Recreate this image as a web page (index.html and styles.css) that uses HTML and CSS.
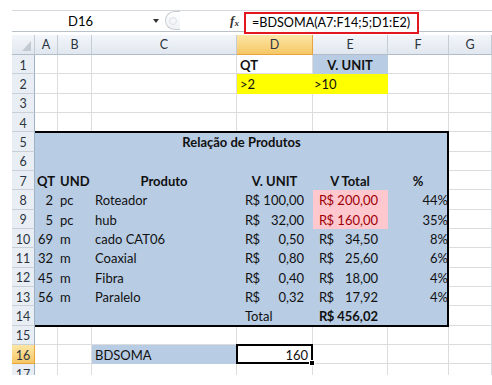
FILE: index.html
```html
<!DOCTYPE html>
<html lang="pt">
<head>
    <meta charset="UTF-8">
    <title>BDSOMA - Relação de Produtos</title>
    <link rel="stylesheet" href="styles.css">
</head>
<body>
    <div class="window">
        <div class="formula-bar">
            <div class="name-box">D16</div>
            <div class="nb-arrow"><span class="tri"></span></div>
            <div class="knob"><span class="knob-dot"></span></div>
            <div class="fx">f<sub>x</sub></div>
            <div class="formula">=BDSOMA(A7:F14;5;D1:E2)</div>
        </div>

        <div class="sheet-wrap">
        <div class="sheet">
            <!-- column headers -->
            <div class="corner"></div>
            <div class="ch">A</div>
            <div class="ch">B</div>
            <div class="ch">C</div>
            <div class="ch sel">D</div>
            <div class="ch">E</div>
            <div class="ch">F</div>
            <div class="ch">G</div>

            <!-- 1 -->
            <div class="rh">1</div>
            <div class="c"></div><div class="c"></div><div class="c"></div>
            <div class="c bold pl3">QT</div>
            <div class="c b bold center">V. UNIT</div>
            <div class="c"></div><div class="c"></div>

            <!-- 2 -->
            <div class="rh">2</div>
            <div class="c"></div><div class="c"></div><div class="c"></div>
            <div class="c yel pl3">&gt;2</div>
            <div class="c yel pl1">&gt;10</div>
            <div class="c"></div><div class="c"></div>

            <!-- 3 -->
            <div class="rh">3</div>
            <div class="c"></div><div class="c"></div><div class="c"></div>
            <div class="c"></div><div class="c"></div><div class="c"></div><div class="c"></div>

            <!-- 4 -->
            <div class="rh">4</div>
            <div class="c"></div><div class="c"></div><div class="c"></div>
            <div class="c"></div><div class="c"></div><div class="c"></div><div class="c"></div>

            <!-- 5 -->
            <div class="rh">5</div>
            <div class="c b bold center title">Relação de Produtos</div>
            <div class="c"></div>

            <!-- 6 -->
            <div class="rh">6</div>
            <div class="c b"></div><div class="c b"></div><div class="c b"></div>
            <div class="c b"></div><div class="c b"></div><div class="c b"></div>
            <div class="c"></div>

            <!-- 7 -->
            <div class="rh">7</div>
            <div class="c b bold">QT</div>
            <div class="c b bold">UND</div>
            <div class="c b bold center">Produto</div>
            <div class="c b bold center">V. UNIT</div>
            <div class="c b bold center">V Total</div>
            <div class="c b bold center">%</div>
            <div class="c"></div>

            <!-- 8 -->
            <div class="rh">8</div>
            <div class="c b num">2</div>
            <div class="c b">pc</div>
            <div class="c b pl3">Roteador</div>
            <div class="c b acc"><span>R$</span><span>100,00</span></div>
            <div class="c pink acc acc-e"><span>R$</span><span>200,00</span></div>
            <div class="c b pct">44%</div>
            <div class="c"></div>

            <!-- 9 -->
            <div class="rh">9</div>
            <div class="c b num">5</div>
            <div class="c b">pc</div>
            <div class="c b pl3">hub</div>
            <div class="c b acc"><span>R$</span><span>32,00</span></div>
            <div class="c pink acc acc-e"><span>R$</span><span>160,00</span></div>
            <div class="c b pct">35%</div>
            <div class="c"></div>

            <!-- 10 -->
            <div class="rh">10</div>
            <div class="c b num">69</div>
            <div class="c b">m</div>
            <div class="c b pl3">cado CAT06</div>
            <div class="c b acc"><span>R$</span><span>0,50</span></div>
            <div class="c b acc acc-e"><span>R$</span><span>34,50</span></div>
            <div class="c b pct">8%</div>
            <div class="c"></div>

            <!-- 11 -->
            <div class="rh">11</div>
            <div class="c b num">32</div>
            <div class="c b">m</div>
            <div class="c b pl3">Coaxial</div>
            <div class="c b acc"><span>R$</span><span>0,80</span></div>
            <div class="c b acc acc-e"><span>R$</span><span>25,60</span></div>
            <div class="c b pct">6%</div>
            <div class="c"></div>

            <!-- 12 -->
            <div class="rh">12</div>
            <div class="c b num">45</div>
            <div class="c b">m</div>
            <div class="c b pl3">Fibra</div>
            <div class="c b acc"><span>R$</span><span>0,40</span></div>
            <div class="c b acc acc-e"><span>R$</span><span>18,00</span></div>
            <div class="c b pct">4%</div>
            <div class="c"></div>

            <!-- 13 -->
            <div class="rh">13</div>
            <div class="c b num">56</div>
            <div class="c b">m</div>
            <div class="c b pl3">Paralelo</div>
            <div class="c b acc"><span>R$</span><span>0,32</span></div>
            <div class="c b acc acc-e"><span>R$</span><span>17,92</span></div>
            <div class="c b pct">4%</div>
            <div class="c"></div>

            <!-- 14 -->
            <div class="rh">14</div>
            <div class="c b"></div><div class="c b"></div><div class="c b"></div>
            <div class="c b acc">Total</div>
            <div class="c b acc acc-e bold"><span>R$</span><span>456,02</span></div>
            <div class="c b"></div>
            <div class="c"></div>

            <!-- 15 -->
            <div class="rh">15</div>
            <div class="c"></div><div class="c"></div><div class="c"></div>
            <div class="c"></div><div class="c"></div><div class="c"></div><div class="c"></div>

            <!-- 16 -->
            <div class="rh sel">16</div>
            <div class="c"></div><div class="c"></div>
            <div class="c b pl3">BDSOMA</div>
            <div class="c right">160</div>
            <div class="c"></div><div class="c"></div><div class="c"></div>

            <!-- 17 -->
            <div class="rh">17</div>
            <div class="c"></div><div class="c"></div><div class="c"></div>
            <div class="c"></div><div class="c"></div><div class="c"></div><div class="c"></div>
        </div>

        <!-- borders drawn over the cells -->
        <div class="sheet overlay">
            <div class="table-frame"></div>
            <div class="active-cell"><span class="handle"></span></div>
        </div>
        </div>
    </div>
</body>
</html>
```

FILE: styles.css
```css
* {
    box-sizing: border-box;
}
body {
    margin: 0;
    font-family: Lato, "Liberation Sans", sans-serif;
    background-color: #fff;
    color: #000;
}
.window {
    width: 492px;
    height: 385px;
    overflow: hidden;
}

/* formula bar */
.formula-bar {
    display: flex;
    align-items: flex-start;
    height: 22px;
    margin: 10px 0 3px 12px;
    border-top: 1px solid #d6dade;
    border-bottom: 1px solid #b9c1ca;
    font-size: 12.6px;
}
.name-box {
    width: 136px;
    height: 20px;
    line-height: 20px;
    padding-left: 56px;
    font-size: 13px;
}
.nb-arrow {
    width: 16px;
    height: 20px;
    display: flex;
    align-items: center;
    justify-content: center;
}
.tri {
    width: 0;
    height: 0;
    border-left: 3px solid transparent;
    border-right: 3px solid transparent;
    border-top: 4px solid #333;
}
.knob {
    width: 15px;
    height: 19px;
    margin: 0 0 0 1px;
    border: 1px solid #c8cdd4;
    border-right: none;
    border-radius: 10px 0 0 10px;
    background: linear-gradient(#ffffff, #eef1f5);
    display: flex;
    align-items: center;
    padding-left: 3px;
}
.knob-dot {
    width: 8px;
    height: 8px;
    border-radius: 50%;
    border: 1px solid #dde1e6;
    background-color: #f4f6f8;
}
.fx {
    width: 17px;
    margin-left: 46px;
    height: 20px;
    line-height: 20px;
    font-family: "Liberation Serif", serif;
    font-style: italic;
    font-weight: bold;
    font-size: 13px;
    color: #333;
    text-align: center;
}
.fx sub {
    font-size: 9px;
    vertical-align: baseline;
    position: relative;
    top: 1px;
}
.formula {
    position: relative;
    z-index: 2;
    width: 175px;
    height: 22px;
    margin: 1px 0 0 1px;
    border: 2px solid #e3171f;
    background-color: #fff;
    padding-left: 6px;
    line-height: 18px;
    white-space: nowrap;
}

/* sheet grid */
.sheet-wrap {
    display: grid;
    margin-left: 12px;
    height: 340px;
    overflow: hidden;
}
.sheet {
    grid-area: 1 / 1;
    display: grid;
    grid-template-columns: 23px 23px 34px 145px 76px 75px 61px 43px;
    grid-template-rows: 20px;
    grid-auto-rows: 19.33px;
    align-content: start;
    font-size: 13px;
}
.overlay {
    pointer-events: none;
}
.corner, .ch, .rh {
    background: linear-gradient(#f3f6fa, #e1e7ef);
    color: #2b3440;
    border-right: 1px solid #c5ccd5;
    border-bottom: 1px solid #b3bdc9;
    display: flex;
    align-items: center;
    justify-content: center;
    font-size: 12.5px;
}
.corner {
    position: relative;
}
.corner::after {
    content: "";
    position: absolute;
    right: 3px;
    bottom: 3px;
    border-left: 9px solid transparent;
    border-bottom: 10px solid #c4cad1;
}
.rh {
    background: #e9eef4;
    border-bottom-color: #c9d0d8;
    border-right-color: #9fb1c5;
    padding-top: 2px;
}
.ch.sel, .rh.sel {
    background: linear-gradient(#fde7a6, #f5c766);
    border-right-color: #e8a33a;
    border-bottom-color: #e8a33a;
}

.c {
    border-right: 1px solid #dadcdd;
    border-bottom: 1px solid #dadcdd;
    display: flex;
    align-items: center;
    padding: 2px 2px 0;
    white-space: nowrap;
    min-width: 0;
    color: #111;
}
.b {
    background-color: #b8cce4;
    border-color: transparent;
}
.yel {
    background-color: #ffff00;
    border-color: transparent;
}
.pink {
    background-color: #ffc7ce;
    border-color: transparent;
    color: #9c0006;
}
.bold {
    font-weight: bold;
}
.center {
    justify-content: center;
}
.right {
    justify-content: flex-end;
    padding-right: 4px;
}
.pl1 {
    padding-left: 1px;
}
.pl3 {
    padding-left: 3px;
}
.title {
    grid-column: span 6;
}
.num {
    justify-content: flex-end;
    padding-right: 4px;
}
.pct {
    justify-content: flex-end;
    padding-right: 0;
}
.acc {
    justify-content: space-between;
    padding-left: 8px;
    padding-right: 8px;
}
.acc span:first-child {
    letter-spacing: -0.6px;
}
.acc-e {
    padding-left: 6px;
    padding-right: 9px;
}

/* overlays */
.table-frame {
    grid-row: 6 / 16;
    grid-column: 2 / 8;
    margin: -1px 0 -1px 0;
    border-top: 2px solid #000;
    border-right: 2px solid #000;
    border-bottom: 2px solid #000;
}
.active-cell {
    grid-row: 17;
    grid-column: 5;
    margin: -1px 0 0 -1px;
    border: 2px solid #000;
    position: relative;
}
.handle {
    position: absolute;
    right: -4px;
    bottom: -4px;
    width: 6px;
    height: 6px;
    background-color: #000;
    border: 1px solid #fff;
}
```
